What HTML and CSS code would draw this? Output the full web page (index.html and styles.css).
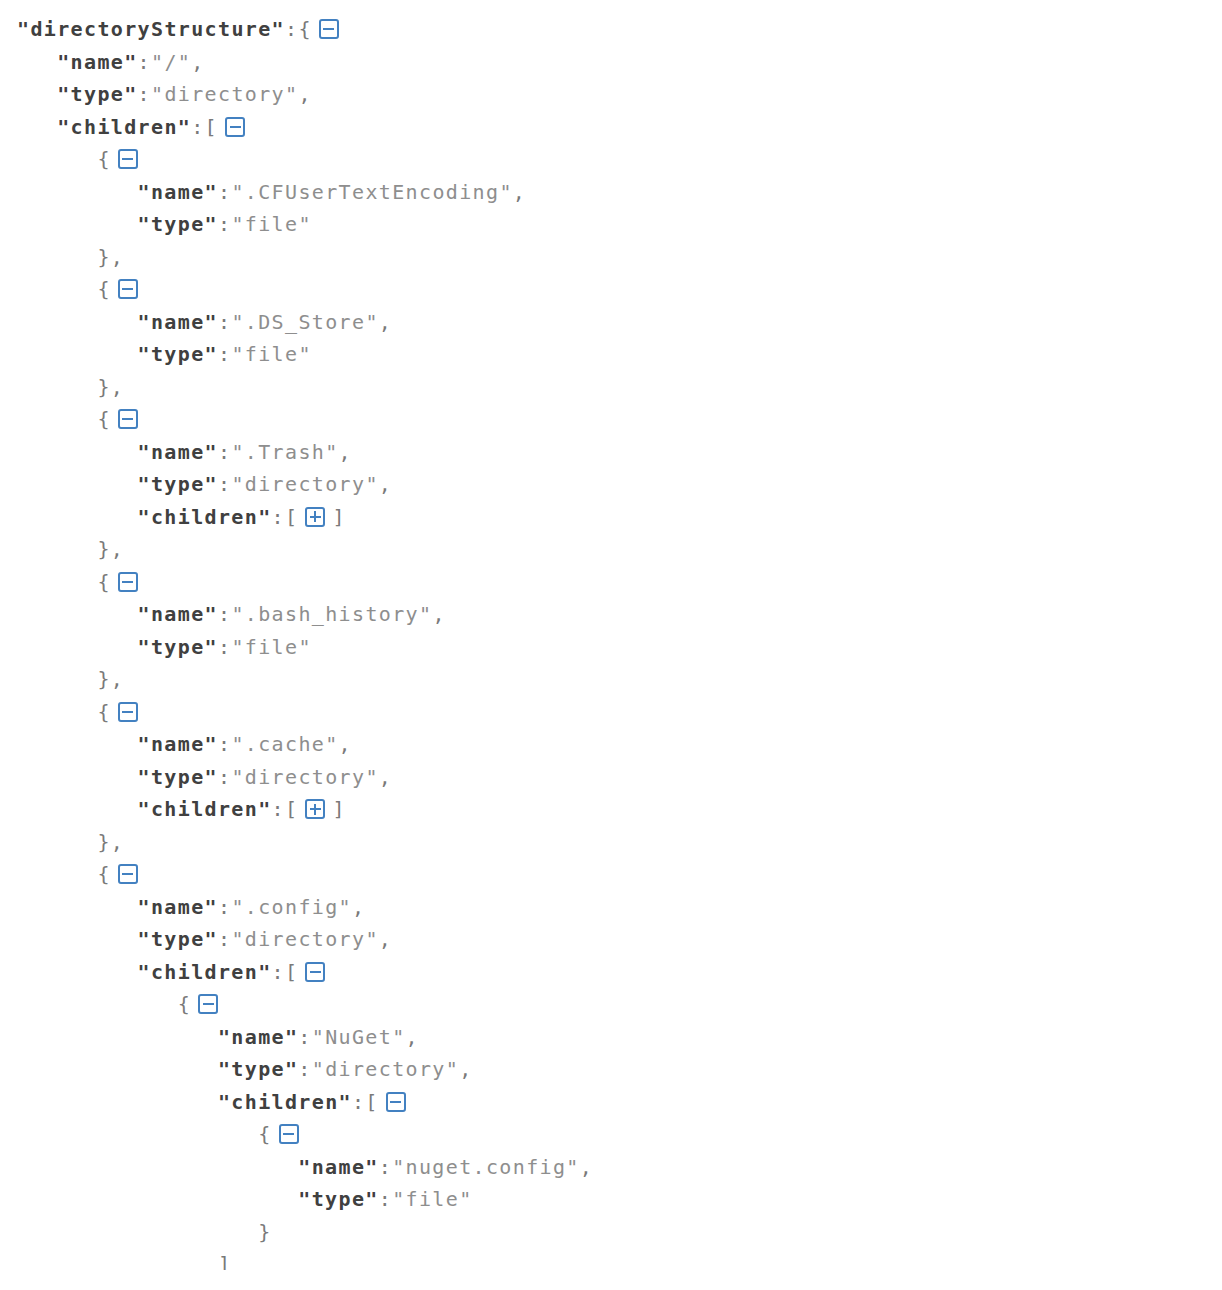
FILE: index.html
```html
<!DOCTYPE html>
<html>
<head>
<meta charset="utf-8">
<title>JSON tree</title>
<link rel="stylesheet" href="styles.css">
</head>
<body>
<div class="json">
  <div class="row"><span class="k">"directoryStructure"</span><span class="p">:{</span><span class="tog minus"></span></div>
  <div class="block">
    <div class="row"><span class="k">"name"</span><span class="p">:</span><span class="v">"/"</span><span class="p">,</span></div>
    <div class="row"><span class="k">"type"</span><span class="p">:</span><span class="v">"directory"</span><span class="p">,</span></div>
    <div class="row"><span class="k">"children"</span><span class="p">:[</span><span class="tog minus"></span></div>
    <div class="block">
      <div class="row"><span class="p">{</span><span class="tog minus"></span></div>
      <div class="block">
        <div class="row"><span class="k">"name"</span><span class="p">:</span><span class="v">".CFUserTextEncoding"</span><span class="p">,</span></div>
        <div class="row"><span class="k">"type"</span><span class="p">:</span><span class="v">"file"</span></div>
      </div>
      <div class="row"><span class="p">},</span></div>

      <div class="row"><span class="p">{</span><span class="tog minus"></span></div>
      <div class="block">
        <div class="row"><span class="k">"name"</span><span class="p">:</span><span class="v">".DS_Store"</span><span class="p">,</span></div>
        <div class="row"><span class="k">"type"</span><span class="p">:</span><span class="v">"file"</span></div>
      </div>
      <div class="row"><span class="p">},</span></div>

      <div class="row"><span class="p">{</span><span class="tog minus"></span></div>
      <div class="block">
        <div class="row"><span class="k">"name"</span><span class="p">:</span><span class="v">".Trash"</span><span class="p">,</span></div>
        <div class="row"><span class="k">"type"</span><span class="p">:</span><span class="v">"directory"</span><span class="p">,</span></div>
        <div class="row"><span class="k">"children"</span><span class="p">:[</span><span class="tog plus mid"></span><span class="p">]</span></div>
      </div>
      <div class="row"><span class="p">},</span></div>

      <div class="row"><span class="p">{</span><span class="tog minus"></span></div>
      <div class="block">
        <div class="row"><span class="k">"name"</span><span class="p">:</span><span class="v">".bash_history"</span><span class="p">,</span></div>
        <div class="row"><span class="k">"type"</span><span class="p">:</span><span class="v">"file"</span></div>
      </div>
      <div class="row"><span class="p">},</span></div>

      <div class="row"><span class="p">{</span><span class="tog minus"></span></div>
      <div class="block">
        <div class="row"><span class="k">"name"</span><span class="p">:</span><span class="v">".cache"</span><span class="p">,</span></div>
        <div class="row"><span class="k">"type"</span><span class="p">:</span><span class="v">"directory"</span><span class="p">,</span></div>
        <div class="row"><span class="k">"children"</span><span class="p">:[</span><span class="tog plus mid"></span><span class="p">]</span></div>
      </div>
      <div class="row"><span class="p">},</span></div>

      <div class="row"><span class="p">{</span><span class="tog minus"></span></div>
      <div class="block">
        <div class="row"><span class="k">"name"</span><span class="p">:</span><span class="v">".config"</span><span class="p">,</span></div>
        <div class="row"><span class="k">"type"</span><span class="p">:</span><span class="v">"directory"</span><span class="p">,</span></div>
        <div class="row"><span class="k">"children"</span><span class="p">:[</span><span class="tog minus"></span></div>
        <div class="block">
          <div class="row"><span class="p">{</span><span class="tog minus"></span></div>
          <div class="block">
            <div class="row"><span class="k">"name"</span><span class="p">:</span><span class="v">"NuGet"</span><span class="p">,</span></div>
            <div class="row"><span class="k">"type"</span><span class="p">:</span><span class="v">"directory"</span><span class="p">,</span></div>
            <div class="row"><span class="k">"children"</span><span class="p">:[</span><span class="tog minus"></span></div>
            <div class="block">
              <div class="row"><span class="p">{</span><span class="tog minus"></span></div>
              <div class="block">
                <div class="row"><span class="k">"name"</span><span class="p">:</span><span class="v">"nuget.config"</span><span class="p">,</span></div>
                <div class="row"><span class="k">"type"</span><span class="p">:</span><span class="v">"file"</span></div>
              </div>
              <div class="row"><span class="p">}</span></div>
            </div>
            <div class="row"><span class="p">]</span></div>
          </div>
        </div>
      </div>
    </div>
  </div>
</div>
</body>
</html>
```

FILE: styles.css
```css
html, body {
  margin: 0;
  padding: 0;
  background: #ffffff;
}

.json {
  box-sizing: border-box;
  height: 1270px;
  overflow: hidden;
  padding: 13px 0 0 17px;
  font-family: "DejaVu Sans Mono", "Liberation Mono", monospace;
  font-size: 20px;
  letter-spacing: 1.36px;
  line-height: 32.5px;
  color: #8a8a8a;
}

.row {
  height: 32.5px;
  white-space: nowrap;
}

.block {
  padding-left: 40.2px;
}

.k {
  font-weight: bold;
  color: #404040;
}

.p {
  color: #7a7a7a;
}

.v {
  color: #8e8e8e;
}

.tog {
  display: inline-block;
  position: relative;
  box-sizing: border-box;
  width: 20px;
  height: 20px;
  margin-left: 7px;
  border: 2px solid #4381c1;
  border-radius: 3px;
  vertical-align: -3px;
}

.tog.mid {
  margin-right: 7px;
}

.tog::before {
  content: "";
  position: absolute;
  left: 2.5px;
  right: 2.5px;
  top: 7px;
  height: 2px;
  background: #4381c1;
}

.tog.plus::after {
  content: "";
  position: absolute;
  top: 2.5px;
  bottom: 2.5px;
  left: 7px;
  width: 2px;
  background: #4381c1;
}
```
